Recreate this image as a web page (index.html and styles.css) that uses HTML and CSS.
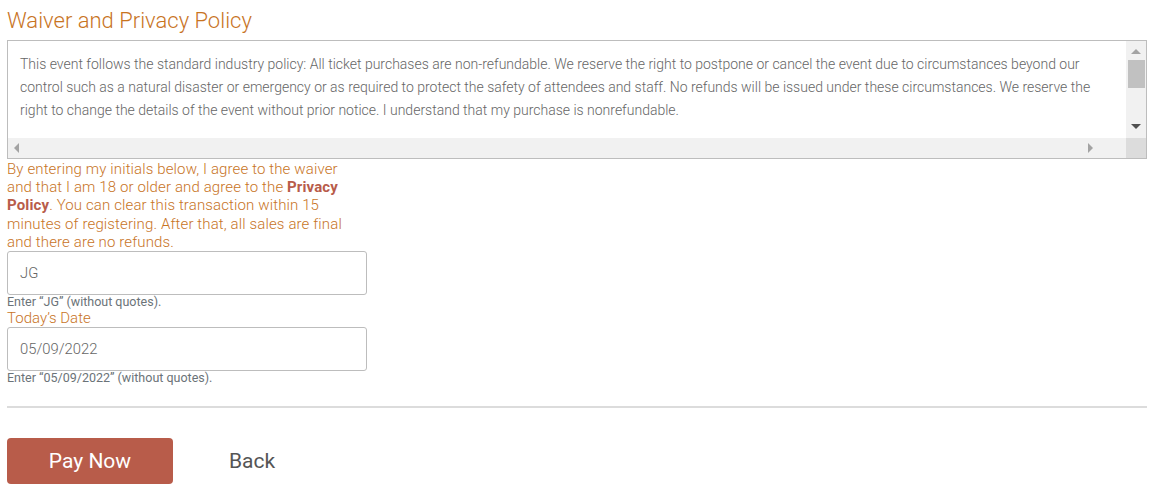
FILE: index.html
```html
<!DOCTYPE html>
<html>
<head>
<meta charset="utf-8">
<link rel="stylesheet" href="styles.css">
</head>
<body>
<div class="page">
  <h2 class="title">Waiver and Privacy Policy</h2>
  <div class="waiver-box">
    <div class="waiver-content">
      <p>This event follows the standard industry policy: All ticket purchases are non-refundable. We reserve the right to postpone or cancel the event due to circumstances beyond our control such as a natural disaster or emergency or as required to protect the safety of attendees and staff. No refunds will be issued under these circumstances. We reserve the right to change the details of the event without prior notice. I understand that my purchase is nonrefundable.</p>
    </div>
    <div class="vbar">
      <span class="arrow up"></span>
      <span class="thumb"></span>
      <span class="arrow down"></span>
    </div>
    <div class="hbar">
      <span class="arrow left"></span>
      <span class="arrow right"></span>
    </div>
    <div class="corner"></div>
  </div>
  <p class="agree">By entering my initials below, I agree to the waiver and that I am 18 or older and agree to the <b>Privacy Policy</b>. You can clear this transaction within 15 minutes of registering. After that, all sales are final and there are no refunds.</p>
  <div class="field">
    <input class="input" type="text" value="JG">
    <div class="help">Enter “JG” (without quotes).</div>
  </div>
  <div class="field">
    <label class="label">Today’s Date</label>
    <input class="input" type="text" value="05/09/2022">
    <div class="help">Enter “05/09/2022” (without quotes).</div>
  </div>
  <hr class="divider">
  <div class="actions">
    <button class="pay">Pay Now</button>
    <a class="back">Back</a>
  </div>
</div>
</body>
</html>
```
FILE: styles.css
```css
html, body {
  margin: 0;
  padding: 0;
  background: #fff;
}
body {
  font-family: Roboto, "Liberation Sans", sans-serif;
}
.page {
  padding: 8px 6px 0 7px;
}
.title {
  margin: 0 0 6px 0;
  font-size: 22px;
  font-weight: 300;
  color: #c8741f;
  line-height: 26px;
}
.waiver-box {
  display: grid;
  grid-template-columns: 1fr 20px;
  grid-template-rows: 97px 20px;
  border: 1px solid #bdbdbd;
  height: 117px;
}
.waiver-content {
  overflow: hidden;
  padding: 12px 16px 0 12px;
}
.waiver-content p {
  margin: 0;
  font-size: 14px;
  font-weight: 300;
  line-height: 23px;
  color: #666;
}
.vbar {
  background: #f1f1f1;
  display: flex;
  flex-direction: column;
  align-items: center;
}
.vbar .thumb {
  display: block;
  width: 17px;
  height: 28px;
  background: #c1c1c1;
  margin-top: 6px;
}
.arrow {
  display: block;
  width: 0;
  height: 0;
}
.arrow.up {
  margin-top: 8px;
  border-left: 5px solid transparent;
  border-right: 5px solid transparent;
  border-bottom: 5px solid #a3a3a3;
}
.arrow.down {
  margin-top: auto;
  margin-bottom: 9px;
  border-left: 5px solid transparent;
  border-right: 5px solid transparent;
  border-top: 5px solid #505050;
}
.hbar {
  background: #f1f1f1;
  display: flex;
  align-items: center;
  justify-content: space-between;
  padding: 0 33px 0 6px;
}
.arrow.left {
  border-top: 5px solid transparent;
  border-bottom: 5px solid transparent;
  border-right: 5px solid #a3a3a3;
}
.arrow.right {
  border-top: 5px solid transparent;
  border-bottom: 5px solid transparent;
  border-left: 5px solid #a3a3a3;
}
.corner {
  background: #dcdcdc;
}
.agree {
  width: 356px;
  margin: 1px 0 0 0;
  font-size: 15px;
  letter-spacing: 0.13px;
  font-weight: 300;
  line-height: 18.2px;
  color: #c8741f;
}
.agree b {
  font-weight: 700;
  color: #b85c4a;
}
.field {
  width: 360px;
}
.input {
  display: block;
  box-sizing: border-box;
  width: 360px;
  height: 44px;
  margin: 0;
  padding: 0 12px;
  border: 1px solid #bdbdbd;
  border-radius: 3px;
  font-family: Roboto, "Liberation Sans", sans-serif;
  font-size: 14.8px;
  font-weight: 300;
  color: #666;
  background: #fff;
  outline: none;
}
.help {
  font-size: 12.5px;
  font-weight: 400;
  color: #6b7378;
  line-height: 14px;
}
.label {
  display: block;
  font-size: 15px;
  font-weight: 300;
  color: #c8741f;
  line-height: 18px;
}
.divider {
  border: 0;
  border-top: 2px solid #dcdcdc;
  margin: 21px 0 0 0;
}
.actions {
  display: flex;
  align-items: center;
  margin-top: 30px;
}
.pay {
  width: 166px;
  height: 46px;
  background: #b85c4a;
  color: #fff;
  border: 0;
  border-radius: 4px;
  font-family: Roboto, "Liberation Sans", sans-serif;
  font-size: 21px;
  font-weight: 400;
}
.back {
  margin-left: 56px;
  font-size: 21px;
  font-weight: 400;
  color: #555;
}
```
